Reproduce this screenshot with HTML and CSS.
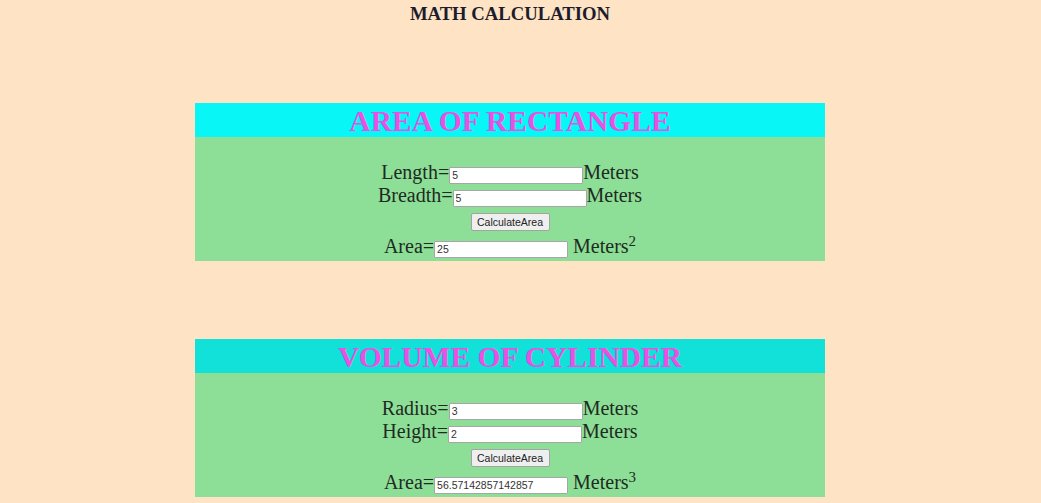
FILE: index.html
```html
<!DOCTYPE html>
<html>
<head>
<meta charset="utf-8">
<title>Math Calculation</title>
<link rel="stylesheet" href="styles.css">
</head>
<body>
<div class="page">
  <div class="title">MATH CALCULATION</div>

  <section class="calc calc-first">
    <div class="calc-head head-aqua">AREA OF RECTANGLE</div>
    <div class="calc-body">
      <div class="row"><span class="label">Length=</span><input class="field" type="text" value="5"><span class="label">Meters</span></div>
      <div class="row"><span class="label">Breadth=</span><input class="field" type="text" value="5"><span class="label">Meters</span></div>
      <div class="btn-row"><button class="btn" type="button">CalculateArea</button></div>
      <div class="row"><span class="label">Area=</span><input class="field" type="text" value="25"><span class="label unit">Meters<sup class="pow">2</sup></span></div>
    </div>
  </section>

  <section class="calc calc-second">
    <div class="calc-head head-turq">VOLUME OF CYLINDER</div>
    <div class="calc-body">
      <div class="row"><span class="label">Radius=</span><input class="field" type="text" value="3"><span class="label">Meters</span></div>
      <div class="row"><span class="label">Height=</span><input class="field" type="text" value="2"><span class="label">Meters</span></div>
      <div class="btn-row"><button class="btn" type="button">CalculateArea</button></div>
      <div class="row"><span class="label">Area=</span><input class="field" type="text" value="56.57142857142857"><span class="label unit">Meters<sup class="pow">3</sup></span></div>
    </div>
  </section>
</div>
</body>
</html>
```

FILE: styles.css
```css
html, body {
  margin: 0;
  padding: 0;
  background: #fee3c4;
}

body {
  font-family: "Liberation Serif", "Times New Roman", serif;
  color: #1f2a22;
  height: 503px;
  overflow: hidden;
}

.page {
  width: 1020px;
}

.title {
  padding-top: 3px;
  height: 21px;
  line-height: 21px;
  font-size: 18.7px;
  font-weight: bold;
  text-align: center;
  color: #1c1c2c;
}

.calc {
  width: 630px;
  margin: 0 auto;
}

.calc-first {
  margin-top: 79px;
}

.calc-second {
  margin-top: 78px;
}

.calc-head {
  height: 34px;
  line-height: 37px;
  font-size: 29.5px;
  font-weight: bold;
  text-align: center;
  color: #ea50e2;
  overflow: hidden;
}

.head-aqua {
  background: #08f7f6;
}

.head-turq {
  background: #12e1d9;
}

.calc-body {
  background: #8ddf97;
  padding-top: 24px;
  padding-bottom: 3px;
}

.row {
  display: flex;
  justify-content: center;
  align-items: baseline;
  height: 23px;
}

.label {
  font-size: 20px;
  line-height: 23px;
  white-space: pre;
}

.unit {
  margin-left: 5px;
}

.pow {
  font-size: 15px;
  line-height: 0;
  vertical-align: 7px;
}

.field {
  box-sizing: border-box;
  width: 134px;
  height: 17px;
  margin: 0;
  padding: 0 2px;
  border: 1px solid #a6a6a6;
  border-radius: 1px;
  background: #fff;
  font-family: "Liberation Sans", Arial, sans-serif;
  font-size: 10.5px;
  color: #333;
}

.btn-row {
  display: flex;
  justify-content: center;
  padding-top: 6px;
  height: 22px;
}

.btn {
  box-sizing: border-box;
  width: 79px;
  height: 18px;
  margin: 0;
  padding: 0;
  border: 1px solid #a3a3a3;
  border-radius: 2px;
  background: #efefef;
  font-family: "Liberation Sans", Arial, sans-serif;
  font-size: 10.5px;
  color: #222;
}
```
